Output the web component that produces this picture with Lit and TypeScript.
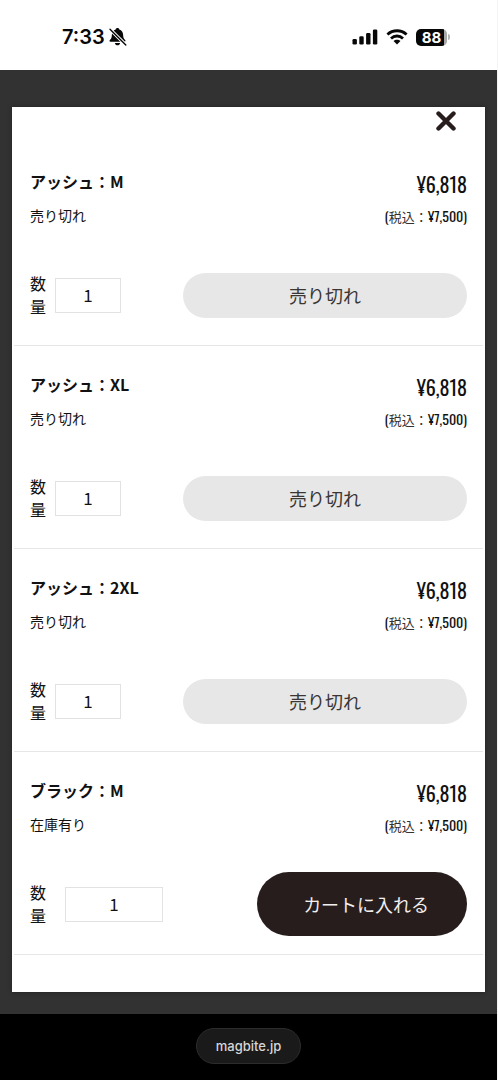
import { LitElement, html, css, svg } from "lit";
import { customElement, property } from "lit/decorators.js";
import { classMap } from "lit/directives/class-map.js";

interface Variant {
  id: string;
  name: string;
  stock: string;
  price: string;
  taxed: string;
  available: boolean;
}

const VARIANTS: Variant[] = [
  { id: "ash-m", name: "アッシュ：M", stock: "売り切れ", price: "¥6,818", taxed: "¥7,500", available: false },
  { id: "ash-xl", name: "アッシュ：XL", stock: "売り切れ", price: "¥6,818", taxed: "¥7,500", available: false },
  { id: "ash-2xl", name: "アッシュ：2XL", stock: "売り切れ", price: "¥6,818", taxed: "¥7,500", available: false },
  { id: "black-m", name: "ブラック：M", stock: "在庫有り", price: "¥6,818", taxed: "¥7,500", available: true },
];

@customElement("status-bar")
export class StatusBar extends LitElement {
  static styles = css`
    :host {
      display: flex;
      justify-content: space-between;
      align-items: center;
      height: 70px;
      padding: 4px 47px 0 62px;
      box-sizing: border-box;
      background: #fff;
      color: #080808;
      font-family: Inter, "Liberation Sans", sans-serif;
    }
    .group {
      display: flex;
      align-items: center;
    }
    .left { gap: 4px; }
    .right { gap: 8px; }
    .time {
      font-size: 20px;
      line-height: 24px;
      font-weight: 600;
    }
    .battery {
      display: flex;
      align-items: center;
      gap: 1px;
    }
    .cell {
      width: 31px;
      height: 17px;
      border-radius: 5px;
      background: linear-gradient(90deg, #080808 90%, #a8a8a8 90%);
      color: #fff;
      font-size: 15px;
      line-height: 17px;
      font-weight: 700;
      text-align: center;
    }
    .tip {
      width: 2px;
      height: 6px;
      border-radius: 0 2px 2px 0;
      background: #b5b5b5;
    }
    svg { display: block; }
  `;

  render() {
    return html`
      <div class="group left">
        <span class="time">7:33</span>
        <svg width="18" height="18" viewBox="0 0 18 18" aria-hidden="true">
          ${svg`
            <path d="M8.500 0c1 0 1.700.6 1.800 1.400 2.500.8 3.700 2.700 3.800 5.200.1 3 .6 4.200 2 5.500.8.8.4 1.700-.7 1.700H1.600c-1.100 0-1.500-.9-.7-1.700 1.400-1.300 1.900-2.500 2-5.500.1-2.500 1.300-4.400 3.800-5.200C6.800.6 7.500 0 8.500 0Z" fill="#080808"/>
            <path d="M5.900 14.900h5.200c-.2 1.500-1.300 2.400-2.600 2.400s-2.400-.9-2.600-2.400Z" fill="#080808"/>
            <path d="M1 1.200 16.800 17" stroke="#fff" stroke-width="3.200"/>
            <path d="M1 1.200 16.800 17" stroke="#080808" stroke-width="1.400" stroke-linecap="round"/>
          `}
        </svg>
      </div>
      <div class="group right">
        <svg width="26" height="16" viewBox="0 0 26 16" fill="#080808" aria-hidden="true">
          <rect x="0.500" y="10" width="4.400" height="5.500" rx="1.300" />
          <rect x="7.300" y="7.200" width="4.400" height="8.300" rx="1.300" />
          <rect x="14.100" y="4" width="4.400" height="11.500" rx="1.300" />
          <rect x="20.900" y="0.500" width="4.400" height="15" rx="1.300" />
        </svg>
        <svg width="22" height="16" viewBox="0 0 22 16" fill="none" stroke="#080808" stroke-width="2.800" aria-hidden="true">
          <path d="M1.400 5.500C6.800.5 15.200.5 20.600 5.500" />
          <path d="M5 9.400c3.400-3.200 8.600-3.200 12 0" />
          <path d="M11 15.400 7.500 12c1.900-1.800 5.100-1.800 7 0Z" fill="#080808" stroke="none" />
        </svg>
        <div class="battery"><span class="cell">88</span><span class="tip"></span></div>
      </div>
    `;
  }
}

@customElement("variant-row")
export class VariantRow extends LitElement {
  static styles = css`
    :host {
      display: block;
      padding: 26px 16px 18px;
      border-bottom: 1px solid #e6e6e6;
      color: #111;
    }
    .head {
      display: flex;
      justify-content: space-between;
    }
    .name {
      margin: 0 0 10px;
      font-size: 16px;
      line-height: 24px;
      font-weight: 700;
    }
    .stock {
      margin: 0;
      font-size: 14px;
      line-height: 24px;
    }
    .prices {
      text-align: right;
      font-family: Oswald, "Noto Sans CJK JP", sans-serif;
    }
    .price {
      margin: 3px 0 8px;
      font-size: 20px;
      line-height: 24px;
      font-weight: 400;
    }
    .taxed {
      margin: 0;
      font-size: 14px;
      line-height: 24px;
    }
    .tax-label {
      color: #333;
      font-size: 13px;
    }
    .buy {
      display: flex;
      align-items: center;
      justify-content: space-between;
      height: 64px;
      margin-top: 35px;
    }
    .qty {
      display: flex;
      align-items: center;
      gap: 9px;
      width: 91px;
    }
    .qty.open {
      gap: 19px;
      width: 133px;
    }
    .label {
      flex: none;
      width: 16px;
      font-size: 16px;
      line-height: 23px;
      word-break: break-all;
    }
    .number {
      flex: 1;
      min-width: 0;
      height: 35px;
      box-sizing: border-box;
      padding: 0 0 2px;
      border: 1px solid #e2e2e2;
      border-radius: 0;
      background: #fff;
      color: #111;
      font: inherit;
      font-size: 17px;
      text-align: center;
    }
    .action {
      width: 65%;
      height: 45px;
      padding: 0;
      border: 0;
      border-radius: 32px;
      background: #e7e7e7;
      color: #3a3634;
      font: inherit;
      font-size: 18px;
      line-height: 24px;
    }
    .action.open {
      width: 48%;
      height: 64px;
      padding-left: 8px;
      background: #261d1c;
      color: #f2efee;
      cursor: pointer;
    }
  `;

  @property({ attribute: false }) variant!: Variant;

  render() {
    const v = this.variant;
    const open = { open: v.available };
    return html`
      <div class="head">
        <div>
          <h2 class="name">${v.name}</h2>
          <p class="stock">${v.stock}</p>
        </div>
        <div class="prices">
          <p class="price">${v.price}</p>
          <p class="taxed">(<span class="tax-label">税込：</span>${v.taxed})</p>
        </div>
      </div>
      <div class="buy">
        <div class=${classMap({ qty: true, ...open })}>
          <label class="label" for=${v.id}>数量</label>
          <input class="number" id=${v.id} type="text" inputmode="numeric" value="1" />
        </div>
        <button class=${classMap({ action: true, ...open })} type="button" ?disabled=${!v.available}>
          ${v.available ? "カートに入れる" : "売り切れ"}
        </button>
      </div>
    `;
  }
}

@customElement("app-root")
export class AppRoot extends LitElement {
  static styles = css`
    :host {
      display: flex;
      flex-direction: column;
      min-height: 100vh;
      padding-right: 1px;
      box-sizing: border-box;
      background: #f4f4f4;
      font-family: "Noto Sans CJK JP", sans-serif;
    }
    .backdrop {
      flex: 1;
      padding: 37px 12px 22px;
      background: #323232;
    }
    .dialog {
      padding: 0 2px 37px;
      background: #fff;
      box-shadow: 0 0 4px #222;
    }
    .top {
      display: flex;
      justify-content: flex-end;
      height: 36px;
      padding-right: 25px;
    }
    .close {
      width: 24px;
      height: 28px;
      padding: 0;
      border: 0;
      background: none;
      cursor: pointer;
    }
    .close svg { display: block; margin: 0 auto; }
    .browser {
      display: flex;
      justify-content: center;
      padding: 14px 0 16px;
      background: #000;
    }
    .address {
      padding: 0 19px;
      border: 1px solid #2c2c2c;
      border-radius: 18px;
      background: #1a1a1a;
      color: #d6d6d6;
      font-family: Inter, "Liberation Sans", sans-serif;
      font-size: 13px;
      line-height: 34px;
      font-weight: 500;
      text-decoration: none;
    }
  `;

  render() {
    return html`
      <status-bar></status-bar>
      <main class="backdrop">
        <section class="dialog" role="dialog" aria-label="カートに入れる">
          <div class="top">
            <button class="close" type="button" aria-label="閉じる">
              <svg width="20" height="20" viewBox="0 0 20 20" stroke="#261d1c" stroke-width="4.400" stroke-linecap="round">
                <path d="M2.500 2.500 17.500 17.500M17.500 2.500 2.500 17.500" />
              </svg>
            </button>
          </div>
          ${VARIANTS.map((v) => html`<variant-row .variant=${v}></variant-row>`)}
        </section>
      </main>
      <footer class="browser"><a class="address" href="#">magbite.jp</a></footer>
    `;
  }
}
